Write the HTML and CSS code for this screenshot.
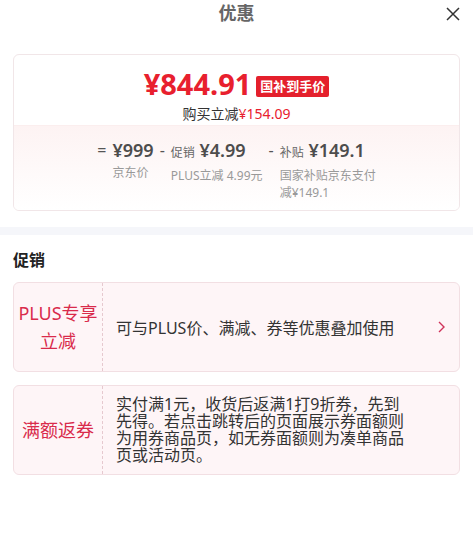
FILE: index.html
```html
<!DOCTYPE html>
<html lang="zh-CN">
<head>
    <meta charset="UTF-8">
    <meta name="viewport" content="width=device-width, initial-scale=1.0">
    <title>优惠</title>
    <link rel="stylesheet" href="styles.css">
</head>
<body>
    <header class="sheet-header">
        <span></span>
        <h1 class="sheet-title">优惠</h1>
        <button class="close-btn" type="button" aria-label="关闭">
            <svg width="14" height="14" viewBox="0 0 14 14">
                <path d="M1 1 L13 13 M13 1 L1 13" stroke="#333" stroke-width="1.5" fill="none"/>
            </svg>
        </button>
    </header>

    <section class="price-card">
        <div class="price-top">
            <div class="price-line">
                <span class="price-main">¥844.91</span>
                <span class="price-badge">国补到手价</span>
            </div>
            <div class="price-save">购买立减<span class="red">¥154.09</span></div>
        </div>
        <div class="price-detail">
            <div class="calc-col">
                <span class="calc-op">=</span>
                <div class="calc-body">
                    <div class="calc-value">¥999</div>
                    <div class="calc-label">京东价</div>
                </div>
            </div>
            <div class="calc-col">
                <span class="calc-op">-</span>
                <div class="calc-body">
                    <div class="calc-value"><small>促销</small> ¥4.99</div>
                    <div class="calc-label">PLUS立减 4.99元</div>
                </div>
            </div>
            <div class="calc-col">
                <span class="calc-op">-</span>
                <div class="calc-body wide">
                    <div class="calc-value"><small>补贴</small> ¥149.1</div>
                    <div class="calc-label">国家补贴京东支付减¥149.1</div>
                </div>
            </div>
        </div>
    </section>

    <div class="band"></div>

    <section class="promo">
        <h2 class="promo-title">促销</h2>

        <div class="promo-card">
            <div class="promo-tag">PLUS专享<br>立减</div>
            <div class="promo-text">
                可与PLUS价、满减、券等优惠叠加使用
                <svg class="chevron" width="7" height="12" viewBox="0 0 7 12">
                    <path d="M1 1 L6 6 L1 11" stroke="#d0335a" stroke-width="1.4" fill="none"/>
                </svg>
            </div>
        </div>

        <div class="promo-card">
            <div class="promo-tag">满额返券</div>
            <div class="promo-text multi">实付满1元，收货后返满1打9折券，先到先得。若点击跳转后的页面展示券面额则为用券商品页，如无券面额则为凑单商品页或活动页。</div>
        </div>
    </section>
</body>
</html>
```

FILE: styles.css
```css
body {
    margin: 0;
    font-family: "Noto Sans", "Noto Sans CJK SC", sans-serif;
    color: #333;
    background-color: #fff;
}

.sheet-header {
    display: grid;
    grid-template-columns: 1fr auto 1fr;
    align-items: center;
    height: 27px;
}

.sheet-title {
    margin: 0;
    font-size: 18px;
    font-weight: bold;
    color: #666;
    line-height: 27px;
}

.close-btn {
    justify-self: end;
    margin-right: 13px;
    padding: 0;
    border: none;
    background: none;
    display: flex;
}

.price-card {
    margin: 27px 13px 0;
    border: 1px solid #f1e6e8;
    border-radius: 6px;
    overflow: hidden;
}

.price-top {
    display: flex;
    flex-direction: column;
    align-items: center;
    padding: 12px 0 1px;
}

.price-line {
    display: flex;
    align-items: center;
    gap: 5px;
    height: 34px;
}

.price-main {
    font-size: 29px;
    font-weight: bold;
    line-height: 34px;
    color: #e8202e;
}

.price-badge {
    background-color: #e4202c;
    color: #fff;
    font-size: 13px;
    font-weight: bold;
    line-height: 21px;
    padding: 0 4px;
    border-radius: 2px;
    margin-top: 4px;
}

.price-save {
    margin-top: 3px;
    font-size: 14px;
    line-height: 20px;
}

.red {
    color: #e8202e;
}

.price-detail {
    display: flex;
    justify-content: center;
    gap: 6px;
    padding: 13px 0 9px;
    border-top: 1px solid #fbeeee;
    background: linear-gradient(#fdf3f3, #fff);
}

.calc-col {
    display: flex;
    gap: 6px;
}

.calc-op {
    font-size: 16px;
    line-height: 22px;
    color: #555;
}

.calc-value {
    font-size: 18px;
    font-weight: 600;
    line-height: 22px;
    color: #4d4d4d;
}

.calc-value small {
    font-size: 12px;
    font-weight: normal;
    color: #666;
}

.calc-label {
    margin-top: 3px;
    font-size: 12px;
    line-height: 17px;
    color: #999;
}

.calc-body.wide {
    width: 96px;
}

.band {
    height: 8px;
    margin-top: 16px;
    background-color: #f5f6fa;
}

.promo {
    padding: 0 13px;
}

.promo-title {
    margin: 14px 0 11px;
    font-size: 16px;
    font-weight: bold;
    line-height: 22px;
    color: #222;
}

.promo-card {
    display: grid;
    grid-template-columns: 89px 1fr;
    min-height: 88px;
    margin-bottom: 13px;
    border: 1px solid #f2dfe3;
    border-radius: 6px;
    background-color: #fef5f7;
}

.promo-tag {
    display: flex;
    align-items: center;
    justify-content: center;
    text-align: center;
    font-size: 18px;
    line-height: 28px;
    color: #d92b4b;
    border-right: 1px dashed #e6c9cf;
}

.promo-text {
    display: flex;
    align-items: center;
    padding: 0 14px 0 13px;
    font-size: 16px;
    color: #333;
}

.promo-text .chevron {
    margin-left: auto;
}

.promo-text.multi {
    display: block;
    align-self: center;
    padding-right: 50px;
    line-height: 17px;
}
```
